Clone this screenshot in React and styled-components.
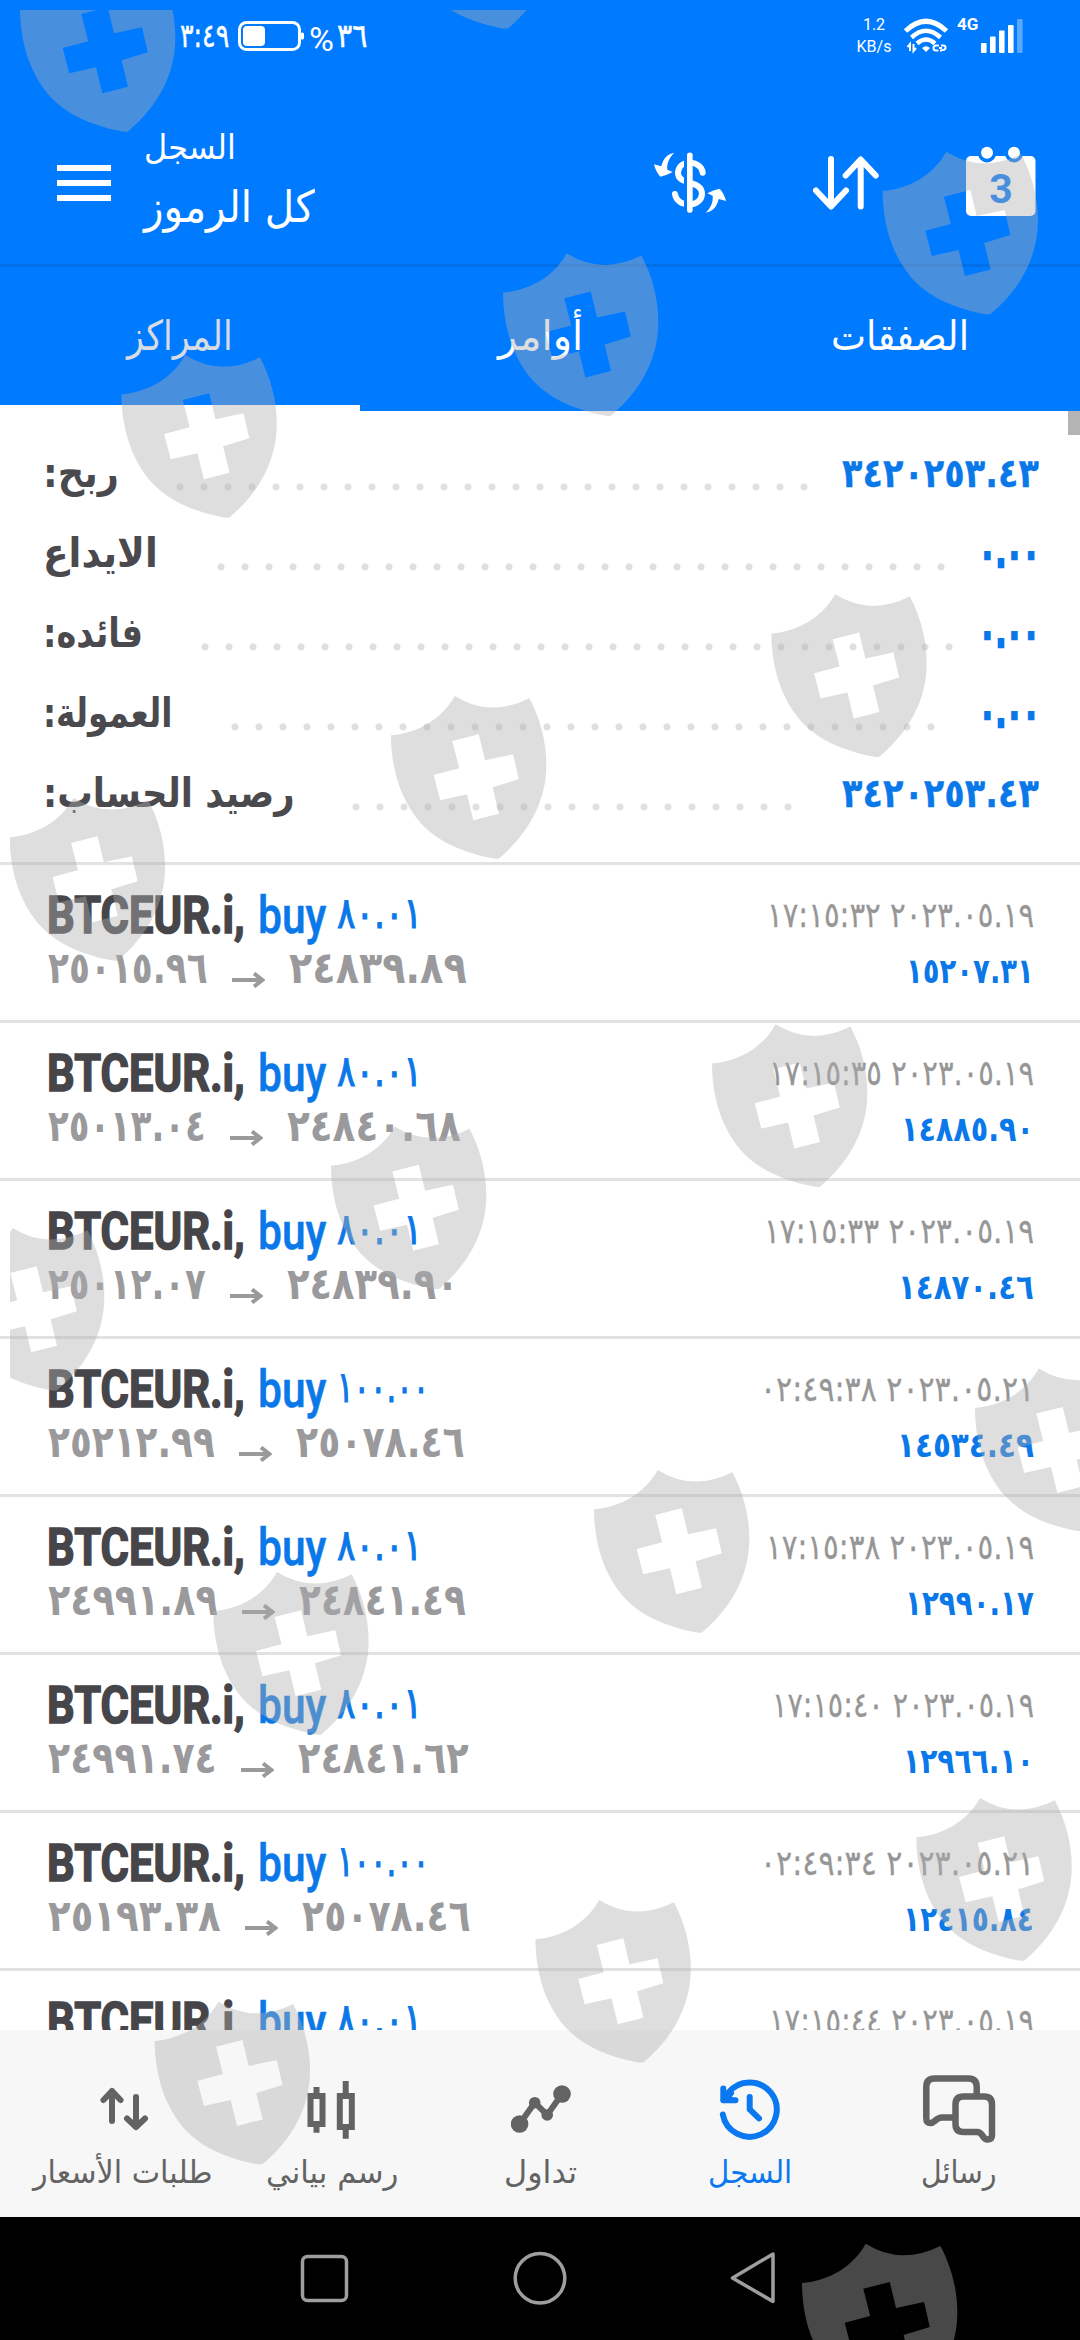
import React, { useLayoutEffect, useRef, useState } from 'react'
import styled, { createGlobalStyle } from 'styled-components'

const summary = [
    { label: 'ربح:', labelWidth: 76, leadStart: 125, dots: 27, value: '٣٤٢٠٢٥٣.٤٣', valueWidth: 197 },
    { label: 'الايداع', labelWidth: 115, leadStart: 166, dots: 31, value: '٠.٠٠', valueWidth: 60 },
    { label: 'فائده:', labelWidth: 100, leadStart: 150, dots: 32, value: '٠.٠٠', valueWidth: 60 },
    { label: 'العمولة:', labelWidth: 129, leadStart: 180, dots: 30, value: '٠.٠٠', valueWidth: 60 },
    { label: 'رصيد الحساب:', labelWidth: 252, leadStart: 301, dots: 19, value: '٣٤٢٠٢٥٣.٤٣', valueWidth: 197 },
]

const deals = [
    { volume: '٨٠.٠١', volumeWidth: 85, open: '٢٥٠١٥.٩٦', openWidth: 160, close: '٢٤٨٣٩.٨٩', closeWidth: 178, date: '٢٠٢٣.٠٥.١٩ ١٧:١٥:٣٢', dateWidth: 267, profit: '١٥٢٠٧.٣١', profitWidth: 128 },
    { volume: '٨٠.٠١', volumeWidth: 85, open: '٢٥٠١٣.٠٤', openWidth: 158, close: '٢٤٨٤٠.٦٨', closeWidth: 174, date: '٢٠٢٣.٠٥.١٩ ١٧:١٥:٣٥', dateWidth: 265, profit: '١٤٨٨٥.٩٠', profitWidth: 133 },
    { volume: '٨٠.٠١', volumeWidth: 85, open: '٢٥٠١٢.٠٧', openWidth: 158, close: '٢٤٨٣٩.٩٠', closeWidth: 172, date: '٢٠٢٣.٠٥.١٩ ١٧:١٥:٣٣', dateWidth: 270, profit: '١٤٨٧٠.٤٦', profitWidth: 136 },
    { volume: '١٠٠.٠٠', volumeWidth: 92, open: '٢٥٢١٢.٩٩', openWidth: 167, close: '٢٥٠٧٨.٤٦', closeWidth: 169, date: '٢٠٢٣.٠٥.٢١ ٠٢:٤٩:٣٨', dateWidth: 274, profit: '١٤٥٣٤.٤٩', profitWidth: 137 },
    { volume: '٨٠.٠١', volumeWidth: 85, open: '٢٤٩٩١.٨٩', openWidth: 170, close: '٢٤٨٤١.٤٩', closeWidth: 167, date: '٢٠٢٣.٠٥.١٩ ١٧:١٥:٣٨', dateWidth: 268, profit: '١٢٩٩٠.١٧', profitWidth: 129 },
    { volume: '٨٠.٠١', volumeWidth: 85, open: '٢٤٩٩١.٧٤', openWidth: 169, close: '٢٤٨٤١.٦٢', closeWidth: 171, date: '٢٠٢٣.٠٥.١٩ ١٧:١٥:٤٠', dateWidth: 262, profit: '١٢٩٦٦.١٠', profitWidth: 131 },
    { volume: '١٠٠.٠٠', volumeWidth: 92, open: '٢٥١٩٣.٣٨', openWidth: 173, close: '٢٥٠٧٨.٤٦', closeWidth: 169, date: '٢٠٢٣.٠٥.٢١ ٠٢:٤٩:٣٤', dateWidth: 274, profit: '١٢٤١٥.٨٤', profitWidth: 131 },
    { volume: '٨٠.٠١', volumeWidth: 85, open: '٢٤٩٩١.٨٩', openWidth: 170, close: '٢٤٨٤١.٤٩', closeWidth: 167, date: '٢٠٢٣.٠٥.١٩ ١٧:١٥:٤٤', dateWidth: 265, profit: '١٢٣٩٠.١٧', profitWidth: 129 },
]

const shields = [
    [20, -31], [400, -134], [882.6, 151.7], [503, 253.3], [121.5, 355],
    [771.4, 594.3], [391, 696], [9.8, 798], [712, 1024.3], [331, 1126.5],
    [-51, 1228], [975, 1368.6], [594, 1470], [213.3, 1572], [916.4, 1798],
    [535.5, 1900], [154.7, 2001.7], [802, 2243.7],
]

// squeezes or stretches one line of text to a given width
function Fit({ width, rtl, children }) {
    const ref = useRef(null)
    const [scale, setScale] = useState(1)

    useLayoutEffect(() => {
        setScale(width / ref.current.offsetWidth)
    }, [width, children])

    return (
        <FitBox style={{ width }}>
            <FitText ref={ref} dir={rtl ? 'rtl' : 'ltr'} style={{ transform: `scaleX(${scale})` }}>{children}</FitText>
        </FitBox>
    )
}

function QuotesIcon() {
    return (
        <svg width="60" height="70" viewBox="91 2075 60 70" fill="none" stroke="currentColor" strokeWidth="6" strokeLinecap="round" strokeLinejoin="round">
            <path d="M110 2121V2091M101.500 2100L110 2091L118.500 2100M134 2097V2127M125 2118.500L134 2127L143 2118.500" />
        </svg>
    )
}

function ChartIcon() {
    return (
        <svg width="60" height="70" viewBox="302 2075 60 70" fill="none" stroke="currentColor">
            <path strokeWidth="6" d="M310.500 2096H322.500V2124H310.500ZM339.800 2096H351.800V2127H339.800Z" />
            <path strokeWidth="6" d="M316.500 2087V2096M316.500 2124V2132.700M345.700 2081V2096M345.700 2127V2138.700" />
        </svg>
    )
}

function TradeIcon() {
    return (
        <svg width="60" height="70" viewBox="510 2075 60 70" fill="currentColor">
            <path d="M518.600 2124L533.700 2102.700L546.200 2115L561 2094" fill="none" stroke="currentColor" strokeWidth="6" />
            <circle cx="518.600" cy="2124" r="8.800" />
            <circle cx="533.700" cy="2102.700" r="5.800" />
            <circle cx="546.200" cy="2115" r="5.800" />
            <circle cx="561" cy="2094" r="8.800" />
        </svg>
    )
}

function HistoryIcon() {
    return (
        <svg width="64" height="70" viewBox="717 2075 64 70" fill="none" stroke="currentColor" strokeWidth="6" strokeLinecap="round" strokeLinejoin="round">
            <path d="M721.800 2114.500A27.200 27.200 0 1 0 727 2093" />
            <path d="M722.300 2088.500V2100.300H735Z" fill="currentColor" stroke="none" />
            <path d="M722.300 2088.500V2100.300H734.500M722.300 2100.300L730 2093" />
            <path d="M748.700 2097V2109.300L758 2118.300" />
        </svg>
    )
}

function MessagesIcon() {
    return (
        <svg width="78" height="70" viewBox="919 2075 78 70" fill="none" stroke="currentColor" strokeWidth="6.500" strokeLinejoin="round">
            <path d="M952 2117.500H941C935 2117.500 933.500 2123 929.500 2123Q925.300 2123 925.300 2118V2087Q925.300 2078.500 933.500 2078.500H967.500Q975.700 2078.500 975.700 2087V2096" />
            <path d="M962.500 2096.500H983Q991 2096.500 991 2104.500V2135Q991 2139.500 986.500 2139.500C981 2139.500 982.500 2132 976 2132H962.500Q954.500 2132 954.500 2124V2104.500Q954.500 2096.500 962.500 2096.500Z" />
        </svg>
    )
}

const navItems = [
    { label: 'طلبات الأسعار', width: 179, Icon: QuotesIcon },
    { label: 'رسم بياني', width: 132, Icon: ChartIcon },
    { label: 'تداول', width: 73, Icon: TradeIcon },
    { label: 'السجل', width: 84, Icon: HistoryIcon, active: true },
    { label: 'رسائل', width: 76, Icon: MessagesIcon },
]

export default function App() {
    return (
        <Screen>
            <GlobalStyle />
            <StatusBar>
                <Clock><Fit width={49}>٣:٤٩</Fit></Clock>
                <svg width="68" height="32" viewBox="0 0 68 32">
                    <rect x="2.500" y="2.500" width="60" height="27" rx="7" fill="none" stroke="#fff" strokeWidth="3" />
                    <rect x="6" y="6" width="22" height="20" rx="4" fill="#fff" />
                    <rect x="63.500" y="12.500" width="3.500" height="7" rx="1.500" fill="#fff" />
                </svg>
                <Percent>%</Percent>
                <Clock><Fit width={30}>٣٦</Fit></Clock>
                <Spacer />
                <Speed>
                    <span>1.2</span>
                    <span>KB/s</span>
                </Speed>
                <svg width="46" height="36" viewBox="0 0 46 36" fill="none" stroke="#fff">
                    <path d="M2.500 13Q23 -6.500 43.500 13" strokeWidth="5" />
                    <path d="M8.500 19.500Q23 6 37.500 19.500" strokeWidth="4.500" />
                    <path d="M14 25.500Q23 17.500 32 25.500" strokeWidth="4.500" />
                    <path d="M19 30Q23 26.500 27 30L23 34Z" fill="#fff" stroke="none" />
                    <path d="M7 33V26L4.500 29M10.500 26V33L13 30" strokeWidth="2" />
                    <path d="M36 27.500H33Q30.500 27.500 30.500 30T33 32.500H35.500M37 32.500H39M36 30H39M38 27.500H40.500Q42.500 27.500 42.500 29.500T40.500 32H39" strokeWidth="2" />
                </svg>
                <Network>4G</Network>
                <svg width="42" height="36" viewBox="0 0 42 36" fill="#fff">
                    <rect x="0" y="25" width="5.600" height="10" rx="1" />
                    <rect x="9" y="18.500" width="5.600" height="16.500" rx="1" />
                    <rect x="18" y="12.500" width="5.600" height="22.500" rx="1" />
                    <rect x="27" y="7" width="5.600" height="28" rx="1" />
                    <rect x="36" y="1" width="5.600" height="34" rx="1" opacity="0.35" />
                </svg>
            </StatusBar>
            <Toolbar>
                <Burger><i /><i /><i /></Burger>
                <Titles>
                    <SmallTitle><Fit width={92} rtl>السجل</Fit></SmallTitle>
                    <BigTitle><Fit width={171} rtl>كل الرموز</Fit></BigTitle>
                </Titles>
                <Tools>
                    <svg width="80" height="70" viewBox="30 30 240 210">
                        <path d="M188 98C186 62 118 54 114 97C112 138 186 118 186 162C184 204 110 204 105 162" fill="none" stroke="#fff" strokeWidth="18" strokeLinecap="round" />
                        <path d="M136.500 30V225" stroke="#007aff" strokeWidth="9" />
                        <path d="M149.500 46V210" stroke="#fff" strokeWidth="17" strokeLinecap="round" />
                        <path d="M103 38C82 42 70 54 64 79L42 73Q47 95 61 110Q80 106 98 96L82 89C80 70 88 52 103 38Z" fill="#fff" />
                        <path d="M197 218C218 214 230 202 236 177L258 183Q253 161 239 146Q220 150 202 160L218 167C220 186 212 204 197 218Z" fill="#fff" />
                    </svg>
                    <svg width="76" height="70" viewBox="808 150 76 70" fill="none" stroke="#fff" strokeWidth="6" strokeLinecap="round" strokeLinejoin="round">
                        <path d="M831 159V206M816 190.500L831 206.500L846 190.500M860.700 206.500V160M845.700 175.500L860.700 159.500L875.700 175.500" />
                    </svg>
                    <Calendar>
                        <svg width="70" height="70" viewBox="966 146 70 70">
                            <rect x="966" y="156" width="69.500" height="60" rx="5" fill="#fff" />
                            <circle cx="987" cy="153.500" r="9" fill="#007aff" />
                            <circle cx="1014" cy="153.500" r="9" fill="#007aff" />
                            <circle cx="987" cy="152.700" r="6" fill="#fff" />
                            <circle cx="1014" cy="152.700" r="6" fill="#fff" />
                        </svg>
                        <CalendarDay>3</CalendarDay>
                    </Calendar>
                </Tools>
            </Toolbar>
            <Tabs>
                <Tab $active><Fit width={106} rtl>المراكز</Fit></Tab>
                <Tab><Fit width={85} rtl>أوامر</Fit></Tab>
                <Tab><Fit width={138} rtl>الصفقات</Fit></Tab>
            </Tabs>
            <Content>
                <Scrollbar />
                <Summary>
                    {summary.map((row) => (
                        <SummaryRow key={row.label}>
                            <SummaryLabel $width={row.leadStart}><Fit width={row.labelWidth} rtl>{row.label}</Fit></SummaryLabel>
                            <Leader $dots={row.dots} />
                            <SummaryValue $heavy={row.value === '٠.٠٠'}><Fit width={row.valueWidth}>{row.value}</Fit></SummaryValue>
                        </SummaryRow>
                    ))}
                </Summary>
                {deals.map((deal, i) => (
                    <Deal key={i}>
                        <DealSide>
                            <DealTop>
                                <Symbol><Fit width={198}>BTCEUR.i,</Fit></Symbol>
                                <Side><Fit width={68}>buy</Fit></Side>
                                <Volume><Fit width={deal.volumeWidth}>{deal.volume}</Fit></Volume>
                            </DealTop>
                            <Prices>
                                <Fit width={deal.openWidth}>{deal.open}</Fit>
                                <svg width="33" height="16" viewBox="0 0 33 16" fill="none" stroke="currentColor" strokeWidth="4">
                                    <path d="M0 8H30M22 1.500L30.500 8L22 14.500" />
                                </svg>
                                <Fit width={deal.closeWidth}>{deal.close}</Fit>
                            </Prices>
                        </DealSide>
                        <DealSide $end>
                            <DealDate><Fit width={deal.dateWidth}>{deal.date}</Fit></DealDate>
                            <Profit><Fit width={deal.profitWidth}>{deal.profit}</Fit></Profit>
                        </DealSide>
                    </Deal>
                ))}
            </Content>
            <BottomNav>
                {navItems.map(({ label, width, Icon, active }) => (
                    <NavItem key={label} $active={active}>
                        <Icon />
                        <Fit width={width} rtl>{label}</Fit>
                    </NavItem>
                ))}
            </BottomNav>
            <SystemBar>
                <svg width="480" height="60" viewBox="298 2248 480 60" fill="none" stroke="#9e9e9e" strokeWidth="3.500" strokeLinejoin="round">
                    <rect x="302.500" y="2256.500" width="44" height="44" rx="5" />
                    <circle cx="540" cy="2278.300" r="24.800" />
                    <path d="M732.500 2278L773 2254V2301.500Z" />
                </svg>
            </SystemBar>
            <Overlay width="1070" height="2330" viewBox="10 10 1070 2330">
                {shields.map(([x, y]) => (
                    <path
                        key={`${x},${y}`}
                        transform={`translate(${x} ${y})`}
                        fillRule="evenodd"
                        d="M0 39.300C27 37 51 23 63.700 0Q99 22 138.400 2.300C149 22 155.500 46 155.300 69C155.300 106 137 138 108 162.400Q105 163 100 162C66 155 44 143 28.600 125.700C10 104 0 73 0 39.300ZM61.300 45L87.800 38.300L94 64.300L122 58.300L127.800 83.300L101.600 91.300L108 117.700L82.300 124.300L76 98.300L49.200 104.300L42.700 79L68.200 72.300Z"
                    />
                ))}
            </Overlay>
        </Screen>
    )
}

const GlobalStyle = createGlobalStyle`
    body {
        margin: 0;
        background: #fff;
        font-family: 'DejaVu Sans', sans-serif;
    }
`

const Screen = styled.div`
    position: relative;
    display: flex;
    flex-direction: column;
    width: 1080px;
    height: 2340px;
    overflow: hidden;
`

const FitBox = styled.span`
    display: inline-block;
    flex: none;
    text-align: left;
`

const FitText = styled.span`
    display: inline-block;
    white-space: nowrap;
    transform-origin: left center;
`

const StatusBar = styled.div`
    display: flex;
    align-items: center;
    height: 72px;
    padding: 0 57px 0 180px;
    background: #007aff;
    color: #fff;
    box-sizing: border-box;

    svg {
        flex: none;
    }
`

const Clock = styled.div`
    font-size: 33px;
    line-height: 70px;
    margin-right: 8px;
    -webkit-text-stroke: 0.5px currentColor;
`

const Percent = styled.div`
    font-family: Roboto, sans-serif;
    font-size: 34px;
    line-height: 72px;
    padding-top: 5px;
    width: 28px;
    margin-left: 4px;
`

const Spacer = styled.div`
    flex: 1;
`

const Speed = styled.div`
    display: flex;
    flex-direction: column;
    align-items: center;
    width: 32px;
    margin-right: 13px;
    font-family: Roboto, sans-serif;
    font-size: 16px;
    line-height: 22px;
`

const Network = styled.div`
    width: 24px;
    margin: -24px 0 0 8px;
    font-family: Roboto, sans-serif;
    font-size: 17px;
    font-weight: 700;
`

const Toolbar = styled.div`
    display: flex;
    height: 195px;
    padding: 0 44px 0 57px;
    background: #007aff;
    border-bottom: 3px solid #006fe8;
    color: #fff;
    box-sizing: border-box;
`

const Burger = styled.div`
    display: flex;
    flex-direction: column;
    gap: 9px;
    width: 54px;
    margin: 93px 33px 0 0;

    i {
        height: 6px;
        background: #fff;
    }
`

const Titles = styled.div`
    padding-top: 50px;
`

const SmallTitle = styled.div`
    height: 55px;
    font-size: 34px;
    line-height: 50px;
`

const BigTitle = styled.div`
    font-size: 44px;
    line-height: 60px;
`

const Tools = styled.div`
    display: flex;
    align-items: flex-start;
    gap: 78px;
    margin-left: auto;
    padding-top: 78px;
`

const Calendar = styled.div`
    position: relative;
    width: 70px;
    height: 70px;
    margin: -4px 0 0 4px;
`

const CalendarDay = styled.div`
    position: absolute;
    inset: 18px 0 0 0;
    color: #007aff;
    font-family: Roboto, sans-serif;
    font-size: 41px;
    font-weight: 700;
    line-height: 50px;
    text-align: center;
`

const Tabs = styled.div`
    display: flex;
    height: 144px;
    background: #007aff;
`

const Tab = styled.div`
    flex: 1;
    box-sizing: border-box;
    border-bottom: 6px solid ${(p) => (p.$active ? '#fff' : 'transparent')};
    color: ${(p) => (p.$active ? '#d6dbe4' : '#fff')};
    font-size: 41px;
    line-height: 138px;
    text-align: center;
`

const Content = styled.div`
    position: relative;
    height: 1619px;
    overflow: hidden;
    background: #fff;
`

const Scrollbar = styled.div`
    position: absolute;
    top: 0;
    right: 0;
    width: 12px;
    height: 24px;
    background: #b4b4b4;
`

const Summary = styled.div`
    height: 454px;
    box-sizing: border-box;
    padding: 22px 41px 0 43px;
    border-bottom: 3px solid #e2e2e2;
`

const SummaryRow = styled.div`
    display: flex;
    height: 80px;
    font-size: 40px;
    font-weight: 700;
    line-height: 80px;
`

const SummaryLabel = styled.div`
    width: ${(p) => p.$width}px;
    color: #4a4a4e;
    font-size: 41px;
`

const Leader = styled.div`
    width: ${(p) => p.$dots * 24}px;
    height: 8px;
    margin-top: 50px;
    background: radial-gradient(circle, #e0e0e0 3px, transparent 4px) 0 0 / 24px 8px;
`

const SummaryValue = styled.div`
    margin-left: auto;
    color: #0a78e8;
    -webkit-text-stroke: ${(p) => (p.$heavy ? '2.5px' : '0.3px')} currentColor;
`

const Deal = styled.div`
    display: flex;
    justify-content: space-between;
    height: 158px;
    box-sizing: border-box;
    padding: 21px 46px 0 47px;
    border-bottom: 3px solid #e2e2e2;
`

const DealSide = styled.div`
    display: flex;
    flex-direction: column;
    align-items: ${(p) => (p.$end ? 'flex-end' : 'flex-start')};
`

const DealTop = styled.div`
    display: flex;
    height: 60px;
`

const Symbol = styled.div`
    color: #46464a;
    font-family: Roboto, sans-serif;
    font-size: 52.5px;
    font-weight: 700;
    line-height: 58px;
    -webkit-text-stroke: 1.6px currentColor;
`

const Side = styled.div`
    margin: 0 11px 0 13px;
    color: #0a78e8;
    font-family: Roboto, sans-serif;
    font-size: 52.5px;
    font-weight: 500;
    line-height: 58px;
    -webkit-text-stroke: 0.6px currentColor;
`

const Volume = styled.div`
    color: #0a78e8;
    font-size: 43px;
    line-height: 54px;
    -webkit-text-stroke: 1.2px currentColor;
`

const Prices = styled.div`
    display: flex;
    gap: 24px;
    margin-left: 1px;
    color: #9a9a9d;
    font-size: 44px;
    font-weight: 700;
    line-height: 44px;

    svg {
        margin-top: 26px;
    }
`

const DealDate = styled.div`
    height: 60px;
    color: #969696;
    font-size: 35px;
    line-height: 59px;
    -webkit-text-stroke: 0.3px currentColor;
`

const Profit = styled.div`
    color: #0a78e8;
    font-size: 35px;
    font-weight: 700;
    line-height: 50px;
`

const BottomNav = styled.div`
    display: flex;
    height: 187px;
    box-sizing: border-box;
    padding: 45px 17px 0 18px;
    background: #f7f7f7;
`

const NavItem = styled.div`
    display: flex;
    flex: 1;
    flex-direction: column;
    align-items: center;
    color: ${(p) => (p.$active ? '#0a78f0' : '#636363')};
    font-size: 31px;
    line-height: 54px;
`

const SystemBar = styled.div`
    display: flex;
    flex: 1;
    justify-content: center;
    padding: 31px 4px 0 0;
    background: #000;
`

const Overlay = styled.svg`
    position: absolute;
    top: 10px;
    left: 10px;
    overflow: hidden;
    fill: rgba(176, 176, 176, 0.41);
    pointer-events: none;
`
